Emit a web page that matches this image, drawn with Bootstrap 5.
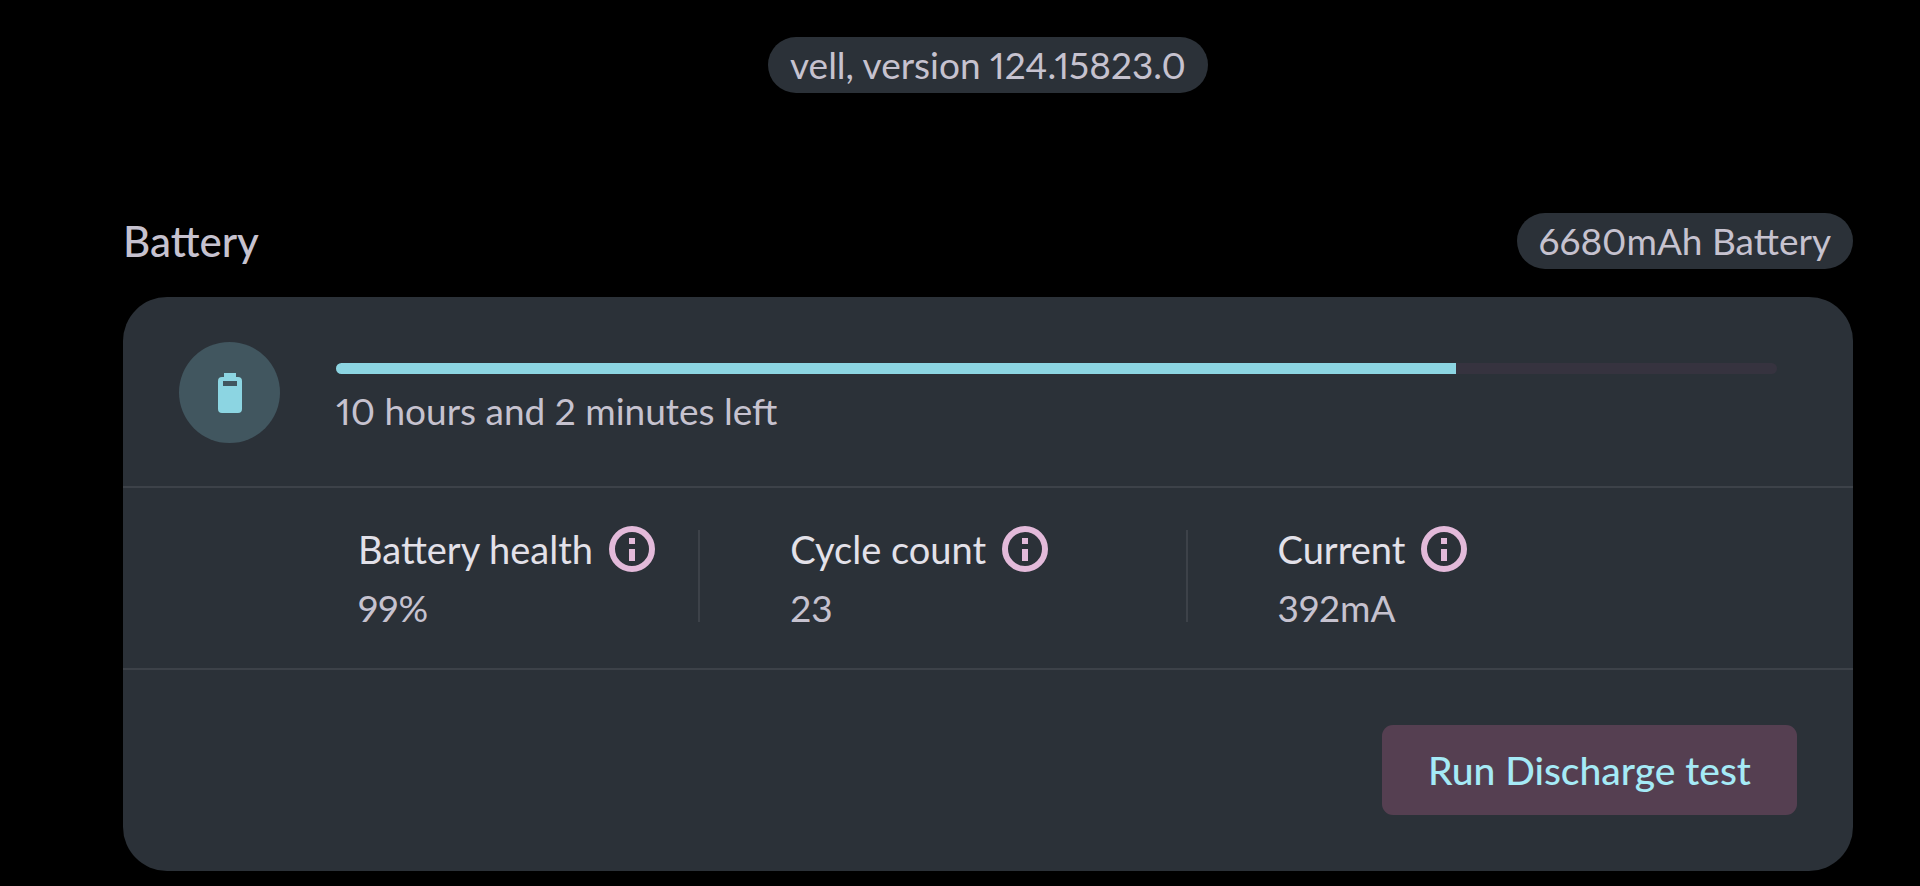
<!DOCTYPE html>
<html lang="en" data-bs-theme="dark">
<head>
<meta charset="utf-8">
<meta name="viewport" content="width=device-width, initial-scale=1">
<title>Diagnostics - Battery</title>
<link rel="stylesheet" href="https://cdn.jsdelivr.net/npm/bootstrap@5.3.0/dist/css/bootstrap.min.css">
<style>
  body { background: #000; color: #c6c2cf; font-family: Lato, sans-serif; font-size: 37px; line-height: 48px; font-variant-numeric: proportional-nums; }
  .page { padding: 37px 67px 16px 123px; }
  .chip { background: #2b3138; padding: 4px 22px; }
  .heading-row { margin-top: 120px; margin-bottom: 28px; }
  .title { font-size: 42px; line-height: 48px; font-weight: 500; color: inherit; }
  .panel { --bs-card-bg: #2b3138; --bs-card-border-width: 0; --bs-card-border-radius: 44px; color: inherit; }
  .status { padding: 45px 76px 43px 56px; gap: 56px; }
  .status-icon { width: 101px; height: 101px; background: #41565f; }
  .level-block { padding-top: 13px; }
  .level { --bs-progress-height: 11px; --bs-progress-bg: #36333f; --bs-progress-bar-bg: #8cd5e2; --bs-progress-border-radius: 6px; margin-bottom: 13px; }
  .stats { display: grid; grid-template-columns: 340fr 487fr 611fr; padding: 42px 56px 46px 235px; }
  .stats, .actions { border-top: 2px solid #3d4249; }
  .stat + .stat { border-left: 2px solid #3d4249; padding-left: 90px; }
  .stat-name { color: #e3e1e9; font-size: 38px; height: 38px; line-height: 38px; gap: 16px; }
  .stat-value { line-height: 38px; margin-top: 21px; margin-bottom: -5px; }
  .info { color: #e3bada; }
  .actions { padding: 55px 56px 56px; }
  .run { --bs-btn-bg: #553f51; --bs-btn-color: #a5eaf6; --bs-btn-hover-bg: #634a5f; --bs-btn-hover-color: #a5eaf6; --bs-btn-font-weight: 500; --bs-btn-font-size: 39px; --bs-btn-line-height: 50px; --bs-btn-padding-x: 46px; --bs-btn-padding-y: 20px; --bs-btn-border-radius: 11px; border: 0; }
</style>
</head>
<body>
<main class="page">
  <header class="text-center d-flex justify-content-center">
    <span class="chip rounded-pill">vell, version 124.15823.0</span>
  </header>
  <div class="heading-row d-flex justify-content-between align-items-center">
    <h1 class="title mb-0">Battery</h1>
    <span class="chip rounded-pill">6680mAh Battery</span>
  </div>
  <section class="card panel">
    <div class="status d-flex align-items-center">
      <div class="status-icon rounded-circle d-flex align-items-center justify-content-center flex-shrink-0">
        <svg width="24" height="40" viewBox="0 0 24 40" fill="#8cd5e2" fill-rule="evenodd" aria-hidden="true"><path d="M6 0h12v4h2a4 4 0 0 1 4 4v28a4 4 0 0 1-4 4H4a4 4 0 0 1-4-4V8a4 4 0 0 1 4-4h2zM5 8v5h14V8z"/></svg>
      </div>
      <div class="level-block flex-grow-1">
        <div class="progress level" role="progressbar" aria-label="Battery level" aria-valuenow="78" aria-valuemin="0" aria-valuemax="100">
          <div class="progress-bar" style="width: 77.7%"></div>
        </div>
        <div>10 hours and 2 minutes left</div>
      </div>
    </div>
    <div class="stats">
      <div class="stat">
        <div class="stat-name d-flex align-items-center">Battery health
          <a class="info d-flex" href="#" aria-label="About battery health"><svg width="46" height="46" viewBox="0 0 46 46" fill="none" stroke="currentColor"><circle cx="23" cy="23" r="20" stroke-width="6"/><path d="M23 12v6M23 23v12" stroke-width="6"/></svg></a>
        </div>
        <div class="stat-value">99%</div>
      </div>
      <div class="stat">
        <div class="stat-name d-flex align-items-center">Cycle count
          <a class="info d-flex" href="#" aria-label="About cycle count"><svg width="46" height="46" viewBox="0 0 46 46" fill="none" stroke="currentColor"><circle cx="23" cy="23" r="20" stroke-width="6"/><path d="M23 12v6M23 23v12" stroke-width="6"/></svg></a>
        </div>
        <div class="stat-value">23</div>
      </div>
      <div class="stat">
        <div class="stat-name d-flex align-items-center">Current
          <a class="info d-flex" href="#" aria-label="About current"><svg width="46" height="46" viewBox="0 0 46 46" fill="none" stroke="currentColor"><circle cx="23" cy="23" r="20" stroke-width="6"/><path d="M23 12v6M23 23v12" stroke-width="6"/></svg></a>
        </div>
        <div class="stat-value">392mA</div>
      </div>
    </div>
    <div class="actions d-flex justify-content-end">
      <button type="button" class="btn run">Run Discharge test</button>
    </div>
  </section>
</main>
<script src="https://cdn.jsdelivr.net/npm/bootstrap@5.3.0/dist/js/bootstrap.bundle.min.js"></script>
</body>
</html>
